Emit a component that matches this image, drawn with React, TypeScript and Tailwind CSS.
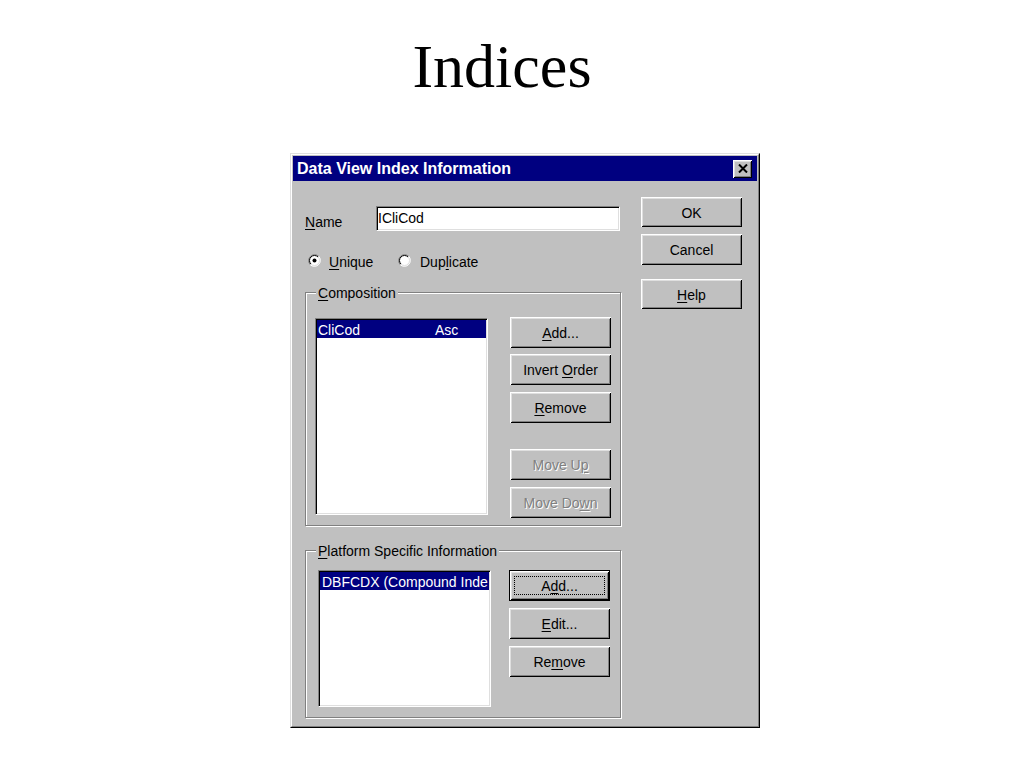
import type { ReactNode } from "react";

const U = ({ children }: { children: ReactNode }) => (
  <span className="underline underline-offset-[2px] decoration-1">{children}</span>
);

type BtnProps = {
  children: ReactNode;
  className?: string;
  disabled?: boolean;
  isDefault?: boolean;
};

const bevel =
  "shadow-[inset_1px_1px_0_#fff,inset_-1px_-1px_0_#000,inset_2px_2px_0_#dfdfdf,inset_-2px_-2px_0_#808080]";

const WinButton = ({ children, className = "", disabled = false, isDefault = false }: BtnProps) => (
  <div
    className={`relative flex w-[101px] items-center justify-center bg-[#c0c0c0] pt-px leading-[16px] ${bevel} ${
      isDefault ? "border border-black" : ""
    } ${disabled ? "text-[#808080] [text-shadow:1px_1px_0_#fff]" : "text-black"} ${className}`}
  >
    {isDefault && <div className="absolute inset-x-[4px] inset-y-[5px] border border-dotted border-black" />}
    <span>{children}</span>
  </div>
);

const sunken =
  "border border-t-[#808080] border-l-[#808080] border-r-white border-b-white shadow-[inset_1px_1px_0_#000,inset_-1px_-1px_0_#dfdfdf] bg-white";

const Radio = ({ checked }: { checked?: boolean }) => (
  <svg width="13" height="13" viewBox="0 0 13 13" className="shrink-0">
    <circle cx="6.5" cy="6.5" r="5.5" fill="#fff" />
    <path d="M2.26 10.74 A6 6 0 0 1 10.74 2.26" stroke="#808080" fill="none" />
    <path d="M10.74 2.26 A6 6 0 0 1 2.26 10.74" stroke="#fff" fill="none" />
    <path d="M2.96 10.04 A5 5 0 0 1 10.04 2.96" stroke="#000" fill="none" />
    <path d="M10.04 2.96 A5 5 0 0 1 2.96 10.04" stroke="#dfdfdf" fill="none" />
    {checked && <circle cx="6.5" cy="6.5" r="2" fill="#000" />}
  </svg>
);

const GroupBox = ({ label, className, children }: { label: ReactNode; className: string; children: ReactNode }) => (
  <div className={`relative w-[316px] border border-[#808080] shadow-[1px_1px_0_#fff,inset_1px_1px_0_#fff] ${className}`}>
    <span className="absolute left-[10px] top-[-8px] bg-[#c0c0c0] px-[2px] leading-[16px]">{label}</span>
    {children}
  </div>
);

export default function App() {
  return (
    <div className="h-[768px] w-[1024px] overflow-hidden bg-white font-['Liberation_Sans',Arial,sans-serif] text-[14px] text-black">
      <div className="flex justify-center pt-[35px]">
        <h1 className="mr-[20px] font-['Liberation_Serif','Times_New_Roman',serif] text-[62px] leading-[62px]">
          Indices
        </h1>
      </div>

      <div className="ml-[290px] mt-[56px] h-[575px] w-[470px] border border-t-[#dfdfdf] border-l-[#dfdfdf] border-r-black border-b-black bg-[#c0c0c0]">
        <div className="flex h-full flex-col border border-t-white border-l-white border-r-[#808080] border-b-[#808080] p-px">
          {/* title bar */}
          <div className="flex h-[25px] items-center justify-between bg-[#000080] pl-[4px] pr-[5px]">
            <span className="text-[16px] font-bold leading-[18px] text-white">Data View Index Information</span>
            <div className={`flex h-[18px] w-[19px] items-center justify-center bg-[#c0c0c0] ${bevel}`}>
              <svg width="10" height="9" viewBox="0 0 10 9">
                <path d="M1 0.5 L9 8.5 M9 0.5 L1 8.5" stroke="#000" strokeWidth="2" fill="none" />
              </svg>
            </div>
          </div>

          {/* body */}
          <div className="flex flex-1 items-start pl-[12px]">
            <div className="flex w-[317px] flex-col pt-[25px]">
              <div className="flex h-[25px] items-start">
                <span className="w-[71px] pt-[8px] leading-[16px]">
                  <U>N</U>ame
                </span>
                <div className={`h-[25px] w-[244px] pt-[3px] leading-[16px] ${sunken}`}>
                  <span className="pl-px">ICliCod</span>
                </div>
              </div>

              <div className="mt-[23px] flex h-[16px] items-start leading-[16px]">
                <div className="ml-[3px] flex w-[90px] items-start">
                  <Radio checked />
                  <span className="ml-[8px]">
                    <U>U</U>nique
                  </span>
                </div>
                <div className="flex items-start">
                  <Radio />
                  <span className="ml-[9px]">
                    Dup<U>l</U>icate
                  </span>
                </div>
              </div>

              <GroupBox
                className="mt-[22px] h-[234px]"
                label={
                  <>
                    <U>C</U>omposition
                  </>
                }
              >
                <div className="flex items-start pl-[9px] pt-[24px]">
                  <div className={`mt-px h-[197px] w-[173px] ${sunken}`}>
                    <div className="m-px flex h-[18px] bg-[#000080] pl-px pt-[2px] leading-[16px] text-white">
                      <span className="w-[117px]">CliCod</span>
                      <span>Asc</span>
                    </div>
                  </div>
                  <div className="ml-[22px] flex flex-col">
                    <WinButton className="h-[31px]">
                      <U>A</U>dd...
                    </WinButton>
                    <WinButton className="mt-[6px] h-[31px]">
                      Invert <U>O</U>rder
                    </WinButton>
                    <WinButton className="mt-[7px] h-[31px]">
                      <U>R</U>emove
                    </WinButton>
                    <WinButton className="mt-[26px] h-[31px]" disabled>
                      Move U<U>p</U>
                    </WinButton>
                    <WinButton className="mt-[7px] h-[31px]" disabled>
                      Move Do<U>w</U>n
                    </WinButton>
                  </div>
                </div>
              </GroupBox>

              <GroupBox
                className="mt-[24px] h-[168px]"
                label={
                  <>
                    <U>P</U>latform Specific Information
                  </>
                }
              >
                <div className="flex items-start pl-[12px] pt-[19px]">
                  <div className={`h-[137px] w-[173px] overflow-hidden ${sunken}`}>
                    <div className="m-px h-[18px] overflow-hidden whitespace-nowrap bg-[#000080] pl-[2px] pt-[2px] leading-[16px] text-white">
                      DBFCDX (Compound Inde
                    </div>
                  </div>
                  <div className="ml-[18px] flex flex-col">
                    <WinButton className="h-[31px]" isDefault>
                      A<U>d</U>d...
                    </WinButton>
                    <WinButton className="mt-[7px] h-[31px]">
                      <U>E</U>dit...
                    </WinButton>
                    <WinButton className="mt-[7px] h-[31px]">
                      Re<U>m</U>ove
                    </WinButton>
                  </div>
                </div>
              </GroupBox>
            </div>

            <div className="ml-[19px] flex flex-col pt-[16px]">
              <WinButton className="h-[30px]">OK</WinButton>
              <WinButton className="mt-[7px] h-[31px]">Cancel</WinButton>
              <WinButton className="mt-[14px] h-[30px]">
                <U>H</U>elp
              </WinButton>
            </div>
          </div>
        </div>
      </div>
    </div>
  );
}
